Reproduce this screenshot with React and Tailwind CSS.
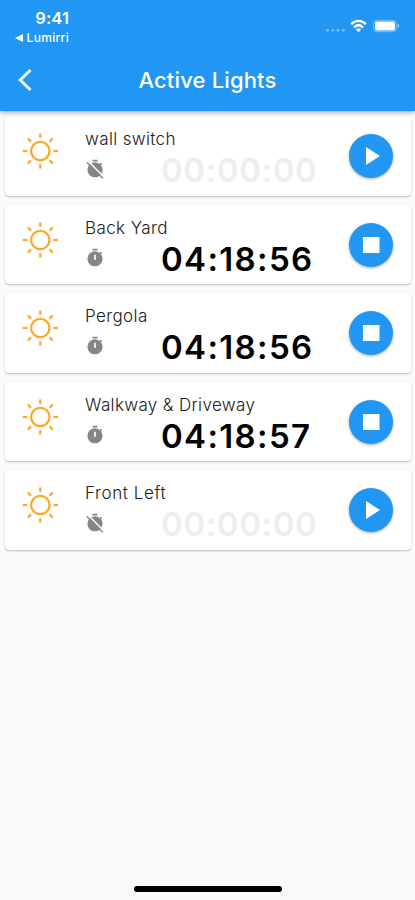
const lights = [
  { name: 'wall switch', time: '00:00:00', on: false, nameClass: 'tracking-[0.35px]' },
  { name: 'Back Yard', time: '04:18:56', on: true, nameClass: 'tracking-[0.4px]' },
  { name: 'Pergola', time: '04:18:56', on: true, nameClass: 'tracking-[0.4px]' },
  { name: 'Walkway & Driveway', time: '04:18:57', on: true, nameClass: 'tracking-[0.35px]' },
  { name: 'Front Left', time: '00:00:00', on: false, nameClass: 'tracking-[0.6px]' },
];

function Sun() {
  return (
    <svg className="h-9 w-9 shrink-0" viewBox="-18.3 -18 36 36" fill="none" stroke="#ffa726" strokeWidth="2.3">
      <circle r="9.2" />
      {[0, 45, 90, 135, 180, 225, 270, 315].map((a) => (
        <path key={a} d="M13.2 0H17.6" transform={`rotate(${a})`} />
      ))}
    </svg>
  );
}

function Timer({ off }) {
  return (
    <svg className="h-[20px] w-[20px] shrink-0" viewBox="0 0 24 24" fill="#858585">
      <path
        fillRule="evenodd"
        d={
          off
            ? 'M9 1h6v2H9zM19.03 7.39l1.42-1.42c-.43-.51-.9-.99-1.41-1.41l-1.42 1.42A9 9 0 1 0 19.03 7.39z'
            : 'M9 1h6v2H9zM19.03 7.39l1.42-1.42c-.43-.51-.9-.99-1.41-1.41l-1.42 1.42A9 9 0 1 0 19.03 7.39zM11 8h2v6h-2z'
        }
      />
      {off && (
        <g fill="none">
          <path d="M3.6 2.4L23.4 22.2" stroke="white" strokeWidth="1.9" />
          <path d="M2.3 4.3L21.4 23.2" stroke="#858585" strokeWidth="1.8" />
        </g>
      )}
    </svg>
  );
}

function LightCard({ light }) {
  return (
    <li className="flex h-[79.6px] rounded-[4px] bg-white pl-[17px] shadow-[0_1px_2px_rgba(0,0,0,0.25)]">
      <div className="pt-[17px]"><Sun /></div>
      <div className="ml-[27px] flex w-[264px] flex-col pt-[12px]">
        <div className={`h-[22px] whitespace-nowrap text-[17px] font-light leading-[22px] text-[#202020] ${light.nameClass}`}>{light.name}</div>
        <div className="-mt-[1px] flex h-[42px] items-center">
          <div className="-ml-[0.5px] mb-[2px]"><Timer off={!light.on} /></div>
          <div className={`ml-[56.5px] whitespace-nowrap text-[33px] font-semibold leading-[40px] ${light.on ? 'tracking-[1.35px] text-black' : 'tracking-[0.6px] text-[#eeeeee]'}`}>{light.time}</div>
        </div>
      </div>
      <button className="mt-[18px] flex h-[44px] w-[44px] shrink-0 items-center justify-center rounded-full bg-[#2196f3] shadow-[0_1px_3px_rgba(0,0,0,0.35)]">
        <svg className="h-[44px] w-[44px]" viewBox="0 0 44 44" fill="white">
          {light.on ? <path d="M14 14h16.5v16H14z" /> : <path d="M17 13l14 9-14 9z" />}
        </svg>
      </button>
    </li>
  );
}

export default function App() {
  return (
    <div className="flex h-[900px] w-[415px] flex-col overflow-hidden bg-[#fafafa] font-['Inter',sans-serif]">
      <header className="relative z-10 flex h-[111px] shrink-0 flex-col bg-[#2196f3] text-white shadow-[0_1px_5px_rgba(0,0,0,0.4)]">
        <div className="flex h-[49px] justify-between">
          <div className="flex w-[69px] flex-col items-end pt-[8px]">
            <div className="text-[16.5px] font-semibold leading-[20px] tracking-[0.1px]">9:41</div>
            <div className="flex items-center gap-[4px] text-[12px] font-medium leading-[20px] tracking-[0.3px]">
              <svg className="h-[8px] w-[8px]" viewBox="0 0 8 8" fill="white"><path d="M0 4L8 0v8z" /></svg>
              Lumirri
            </div>
          </div>
          <svg className="mr-[14px] mt-[18px] h-[16px] w-[76px]" viewBox="325 18 76 16" fill="white">
            <g opacity=".4"><circle cx="327.5" cy="30.3" r="1.4" /><circle cx="332.8" cy="30.3" r="1.4" /><circle cx="338" cy="30.3" r="1.4" /><circle cx="343.2" cy="30.3" r="1.4" /></g>
            <g fill="none" stroke="white" strokeWidth="2.4">
              <path d="M351.2 24.2C355.5 19.8 361.5 19.8 365.8 24.2" />
              <path d="M354 27.3C356.8 24.6 360.2 24.6 363 27.3" />
            </g>
            <path d="M355.9 29.4q2.6-2.2 5.2 0l-2.6 2.9z" />
            <rect x="373.3" y="20.3" width="23" height="11.4" rx="3.2" fill="none" stroke="white" strokeOpacity=".4" />
            <rect x="375" y="21.4" width="20" height="9.2" rx="1.8" />
            <path d="M397.6 23.8q3 2.2 0 4.4z" opacity=".6" />
          </svg>
        </div>
        <div className="flex h-[62px] items-center">
          <svg className="ml-[17px] h-[24px] w-[16px]" viewBox="0 0 16 24" fill="none" stroke="white" strokeWidth="2.9"><path d="M13.5 2L3.2 12l10.3 10" /></svg>
          <h1 className="-ml-[33px] w-[415px] text-center text-[22px] font-medium leading-[28px] tracking-[0.15px]">Active Lights</h1>
        </div>
      </header>
      <ul className="flex flex-1 flex-col gap-[9px] pl-[5px] pr-[4px] pt-[5px]">
        {lights.map((l) => <LightCard key={l.name} light={l} />)}
      </ul>
      <footer className="flex justify-center pb-[8px]"><div className="h-[6px] w-[148px] rounded-full bg-black" /></footer>
    </div>
  );
}
